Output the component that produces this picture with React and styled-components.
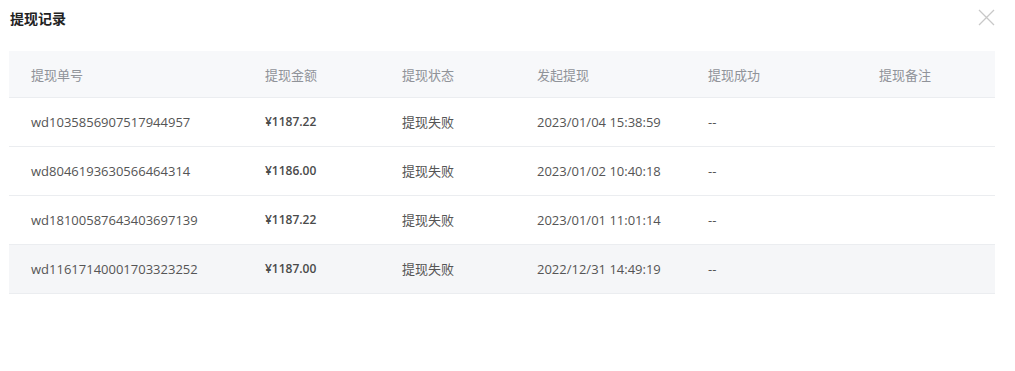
import styled, { createGlobalStyle } from 'styled-components'

const GlobalStyle = createGlobalStyle`
  body {
    margin: 0;
    background: #fff;
    font-family: "Noto Sans CJK SC", "Open Sans", sans-serif;
  }
`

const columns = [
  { key: 'no', label: '提现单号', width: 234 },
  { key: 'amount', label: '提现金额', width: 137 },
  { key: 'status', label: '提现状态', width: 135 },
  { key: 'time', label: '发起提现', width: 171 },
  { key: 'done', label: '提现成功', width: 171 },
  { key: 'note', label: '提现备注', width: 138 },
]

const records = [
  { no: 'wd1035856907517944957', amount: '¥1187.22', status: '提现失败', time: '2023/01/04 15:38:59', done: '--', note: '' },
  { no: 'wd8046193630566464314', amount: '¥1186.00', status: '提现失败', time: '2023/01/02 10:40:18', done: '--', note: '' },
  { no: 'wd18100587643403697139', amount: '¥1187.22', status: '提现失败', time: '2023/01/01 11:01:14', done: '--', note: '' },
  { no: 'wd11617140001703323252', amount: '¥1187.00', status: '提现失败', time: '2022/12/31 14:49:19', done: '--', note: '', hover: true },
]

function App() {
  return (
    <>
      <GlobalStyle />
      <Dialog>
        <Header>
          <Title>提现记录</Title>
          <CloseButton aria-label="close">
            <svg width="17" height="17" viewBox="0 0 17 17">
              <path d="M1 1L16 16M16 1L1 16" stroke="#c8c8c8" strokeWidth="1.3" fill="none" />
            </svg>
          </CloseButton>
        </Header>
        <Table>
          <HeadRow>
            {columns.map(col => (
              <HeadCell key={col.key} $width={col.width}>{col.label}</HeadCell>
            ))}
          </HeadRow>
          {records.map(rec => (
            <BodyRow key={rec.no} $hover={rec.hover}>
              {columns.map(col => (
                <Cell key={col.key} $width={col.width} $money={col.key === 'amount'}>
                  {rec[col.key]}
                </Cell>
              ))}
            </BodyRow>
          ))}
        </Table>
      </Dialog>
    </>
  )
}

const Dialog = styled.div`
  width: 1015px;
  height: 371px;
  box-sizing: border-box;
  padding: 0 20px 0 9px;
`

const Header = styled.div`
  display: flex;
  justify-content: space-between;
  align-items: center;
  height: 36px;
  padding-left: 1px;
`

const Title = styled.h2`
  margin: 0;
  font-size: 14px;
  font-weight: 700;
  color: #222;
`

const CloseButton = styled.button`
  border: none;
  background: none;
  padding: 0;
  margin-top: -1px;
  display: flex;
  cursor: pointer;
`

const Table = styled.div`
  margin-top: 15px;
  width: 986px;
`

const HeadRow = styled.div`
  display: flex;
  height: 46px;
  align-items: center;
  background: #f7f8fa;
  border-bottom: 1px solid #ebedf0;
`

const BodyRow = styled.div`
  display: flex;
  height: 48px;
  align-items: center;
  background: ${props => props.$hover ? '#f5f6f8' : '#fff'};
  border-bottom: 1px solid #ebedf0;
`

const HeadCell = styled.div`
  width: ${props => props.$width}px;
  box-sizing: border-box;
  padding-left: 22px;
  font-size: 13px;
  color: #909399;
`

const Cell = styled.div`
  width: ${props => props.$width}px;
  box-sizing: border-box;
  padding-left: 22px;
  margin-top: -1px;
  font-family: ${props => props.$money ? '"Open Sans", sans-serif' : '"Open Sans", "Noto Sans CJK SC", sans-serif'};
  font-size: ${props => props.$money ? '12px' : '13px'};
  font-weight: ${props => props.$money ? 600 : 400};
  color: ${props => props.$money ? '#4a4a4a' : '#555'};
`

export default App
